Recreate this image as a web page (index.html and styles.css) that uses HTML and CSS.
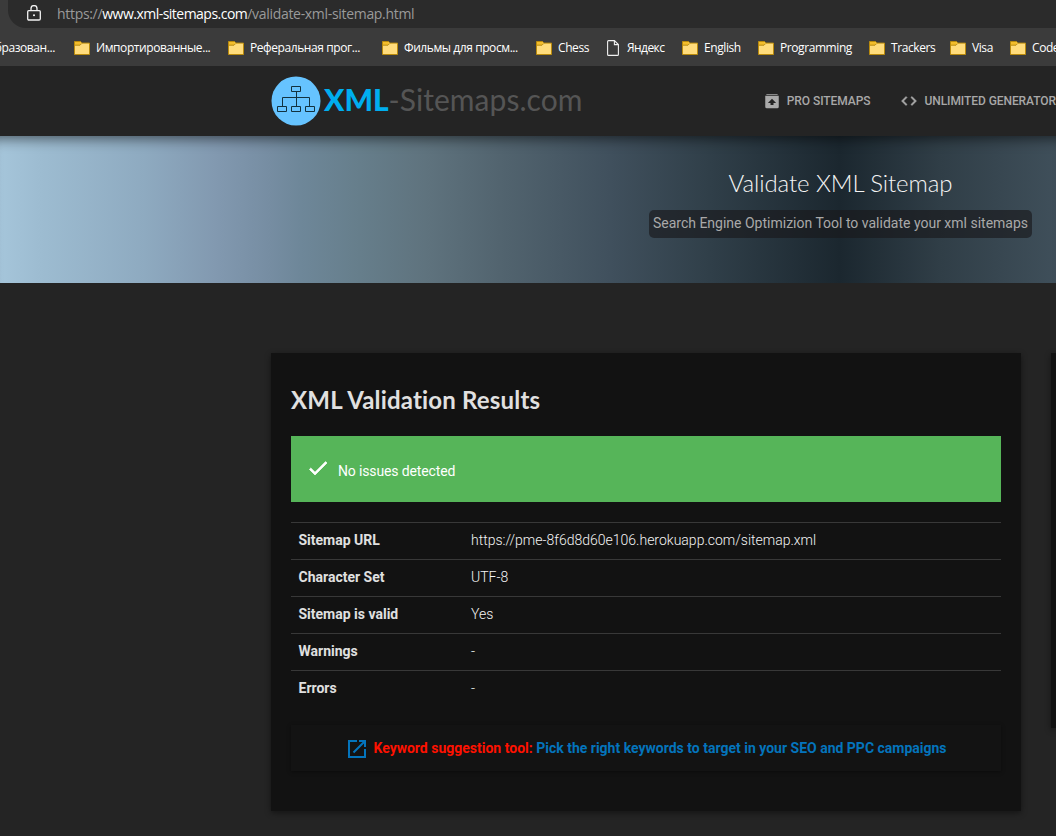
FILE: index.html
```html
<!DOCTYPE html>
<html lang="en">
<head>
<meta charset="utf-8">
<title>Validate XML Sitemap</title>
<link rel="stylesheet" href="styles.css">
</head>
<body>
<svg class="defs" width="0" height="0">
  <symbol id="folder" viewBox="0 0 16 14">
    <path d="M.5 13.5V.5h6l1.3 1.6h7.7v11.4z" fill="#ffdc7c" stroke="#b98a0c"/>
    <path d="M1 1h5.3l1 1.3L5.8 4H1z" fill="#f3bd2b"/>
    <path d="M1 4.2h5L7.7 2.500" fill="none" stroke="#b98a0c"/>
  </symbol>
</svg>
<div class="addressbar">
  <div class="omnibox">
    <svg class="lock" viewBox="0 0 14 16"><path d="M1.700 5.700h10.600q1 0 1 1v7q0 1.300-1.300 1.300H2q-1.300 0-1.300-1.300v-7q0-1 1-1zM4 5.500V3.600a3 3 0 0 1 6 0v1.900" fill="none" stroke="#f2f2f2" stroke-width="1.3"/><circle cx="7" cy="10.300" r="1" fill="#fff"/></svg>
    <span class="url">https://<b>www.xml-sitemaps.com</b>/validate-xml-sitemap.html</span>
  </div>
</div>
<nav class="bookmarks">
  <span class="first">образован...</span>
  <span class="bm"><svg><use href="#folder"/></svg>Импортированные...</span>
  <span class="bm"><svg><use href="#folder"/></svg>Реферальная прог...</span>
  <span class="bm"><svg><use href="#folder"/></svg>Фильмы для просм...</span>
  <span class="bm"><svg><use href="#folder"/></svg>Chess</span>
  <span class="bm file"><svg viewBox="0 0 12 16"><path d="M1.600.600h5.800l4 4v9.800q0 1-1 1H1.600q-1 0-1-1V1.600q0-1 1-1zM7.400.600v4h4" fill="none" stroke="#f0f0f0" stroke-width="1.100"/></svg>Яндекс</span>
  <span class="bm"><svg><use href="#folder"/></svg>English</span>
  <span class="bm"><svg><use href="#folder"/></svg>Programming</span>
  <span class="bm"><svg><use href="#folder"/></svg>Trackers</span>
  <span class="bm"><svg><use href="#folder"/></svg>Visa</span>
  <span class="bm"><svg><use href="#folder"/></svg>Code</span>
</nav>
<header class="site-header">
  <svg class="logo" viewBox="0 0 50 50">
    <circle cx="25" cy="25" r="24.500" fill="#66c3ff"/>
    <g fill="none" stroke="#12323f">
      <path d="M20.500 10.500h9v5h-9zM6.500 30.500h9v5h-9zM20.500 30.500h9v5h-9zM34.500 30.500h9v5h-9zM25.500 16v14M11.500 30v-8.500h27V30"/>
    </g>
  </svg>
  <span class="brand"><b>XML</b><i>-Sitemaps.com</i></span>
  <a class="nav pro"><svg viewBox="0 0 24 24"><path fill-rule="evenodd" d="M5 2.500h14l1 1.300H4zM3 5h18v14.500q0 2-2 2H5q-2 0-2-2zM12 9l-5.500 5.500H10v2.800h4v-2.800h3.500z" fill="#aaa"/></svg><span>PRO SITEMAPS</span></a>
  <a class="nav gen"><svg viewBox="0 0 24 24"><path d="M9.400 16.600 4.800 12l4.600-4.600L8 6l-6 6 6 6zm5.200 0 4.600-4.600-4.600-4.600L16 6l6 6-6 6z" fill="#aaa" stroke="#aaa" stroke-width=".7"/></svg><span>UNLIMITED GENERATOR</span></a>
</header>
<section class="hero">
  <div class="hero-inner">
    <h1><span>Validate XML Sitemap</span></h1>
    <p><span>Search Engine Optimizion Tool to validate your xml sitemaps</span></p>
  </div>
</section>
<main class="content">
  <article class="card">
    <h2><span>XML Validation Results</span></h2>
    <div class="alert"><svg viewBox="0 0 24 24"><path d="M9 16.200 4.800 12l-1.400 1.400L9 19 21 7l-1.400-1.400z" fill="#fff" stroke="#fff" stroke-width=".7"/></svg><span>No issues detected</span></div>
    <table>
      <tr><th>Sitemap URL</th><td><span>https://pme-8f6d8d60e106.herokuapp.com/sitemap.xml</span></td></tr>
      <tr><th>Character Set</th><td>UTF-8</td></tr>
      <tr><th>Sitemap is valid</th><td>Yes</td></tr>
      <tr><th>Warnings</th><td>-</td></tr>
      <tr><th>Errors</th><td>-</td></tr>
    </table>
    <a class="promo"><svg viewBox="0 0 24 24"><path d="M19 19H5V5h7V3H3v18h18v-9h-2zM14 3v2h3.600l-9.800 9.800 1.400 1.400L19 6.400V10h2V3z" fill="#0474bc"/></svg><span><em>Keyword suggestion tool:</em> Pick the right keywords to target in your SEO and PPC campaigns</span></a>
  </article>
  <aside class="side"></aside>
</main>
</body>
</html>
```
FILE: styles.css
```css
* { box-sizing: border-box; }
html, body { overflow: hidden; }
body { margin: 0; width: 1056px; height: 836px; background: #242424; font-family: Roboto, sans-serif; font-size: 14px; color: #e0e0e0; }
svg { display: block; flex: none; }
.defs { display: none; }

.addressbar { height: 28px; padding-left: 8px; background: #3b3b3b; }
.omnibox { height: 28px; padding: 0 0 2px 19px; display: flex; align-items: center; background: #2b2b2b; border-radius: 0 0 0 18px; }
.lock { width: 14px; height: 16px; margin-top: -1px; }
.url { margin-left: 16px; font: 14px "Open Sans", sans-serif; letter-spacing: -.31px; color: #9a9a9a; white-space: nowrap; }
.url b { font-weight: 400; letter-spacing: -.52px; color: #fff; }

.bookmarks { height: 38px; width: 100%; overflow: hidden; display: grid; grid-template-columns: 74px 154px 154px 154px 71px 75px 76px 111px 81px 60px 46px; align-items: center; background: #3b3b3b; font: 12px "Open Sans", sans-serif; letter-spacing: -.42px; color: #fff; white-space: nowrap; padding-top: 1px; }
.first { margin-left: -12px; }
.bm { display: flex; align-items: center; gap: 6px; }
.bm svg { width: 16px; height: 14px; }
.bm.file { gap: 8px; letter-spacing: -.55px; }
.bm.file svg { width: 12px; height: 16px; }

.site-header { height: 70px; width: 100%; padding-left: 271px; display: flex; align-items: center; background: #242424; }
.logo { width: 50px; height: 50px; }
.brand { width: 260px; margin: -5px 0 0 3px; font: 30px Lato, sans-serif; color: #555; white-space: nowrap; }
.brand b { font-weight: 900; color: #00aeef; }
.brand i { font-style: normal; letter-spacing: .05px; }
.nav { display: flex; align-items: center; font-size: 12px; font-weight: 500; letter-spacing: -.07px; color: #a8a8a8; white-space: nowrap; }
.nav svg { width: 18px; height: 18px; }
.nav.pro { margin-left: 179px; gap: 6px; }
.nav.gen { margin-left: 30px; gap: 6px; }

.hero { height: 147px; overflow: hidden; background: linear-gradient(90deg, #a5c5da 0, #9dbcd1 40px, #8eaac0 145px, #8299b0 215px, #768da2 270px, #6e8799 300px, #667e8b 360px, #5f737e 425px, #52646f 500px, #40505d 610px, #303f49 710px, #1b272f 840px, #303e47 940px, #3f4f5a 1056px); box-shadow: inset 0 14px 14px -12px rgba(0, 0, 0, .6); }
.hero-inner { width: 1681px; padding-top: 32px; text-align: center; }
h1 { margin: 0; font: 300 24px/30px Lato, sans-serif; letter-spacing: -.1px; color: #f4f4f4; }
p { margin: 12px auto 0; width: 383px; height: 28px; border-radius: 5px; background: rgba(24, 24, 28, .65); line-height: 27px; color: #a9a9a9; white-space: nowrap; }

.content { width: 100%; padding: 70px 0 0 271px; display: flex; align-items: flex-start; gap: 30px; }
.card, .side { background: #121212; box-shadow: 0 2px 6px rgba(0, 0, 0, .45); }
.card { flex: none; width: 750px; height: 458px; padding: 32px 20px 0; }
.side { flex: 1; height: 375px; }
h2 { margin: 0; font: 700 24px/30px Lato, sans-serif; font-variant-ligatures: none; letter-spacing: .18px; color: #e0e0e0; }
.alert { margin-top: 21px; height: 66px; padding-left: 15px; display: flex; align-items: center; background: #56b559; color: #fff; }
.alert svg { width: 24px; height: 24px; margin: -2px 8px 0 0; }
.alert span { padding-top: 4px; letter-spacing: -.14px; }
table { width: 710px; margin-top: 20px; border-collapse: separate; border-spacing: 0; }
th, td { height: 37px; border-top: 1px solid #383838; padding: 0 8px 2px; text-align: left; }
th { width: 172px; font-weight: 700; padding-left: 7.500px; }
td { font-weight: 300; color: #f4f4f4; }
.promo { margin-top: 18px; height: 46px; display: flex; align-items: center; justify-content: center; gap: 4px; background: #131313; box-shadow: 0 1px 4px rgba(0, 0, 0, .4); font-weight: 700; color: #0474bc; white-space: nowrap; }
.promo svg { width: 24px; height: 24px; margin-top: 1px; }
.promo em { font-style: normal; color: #f10; }
```
